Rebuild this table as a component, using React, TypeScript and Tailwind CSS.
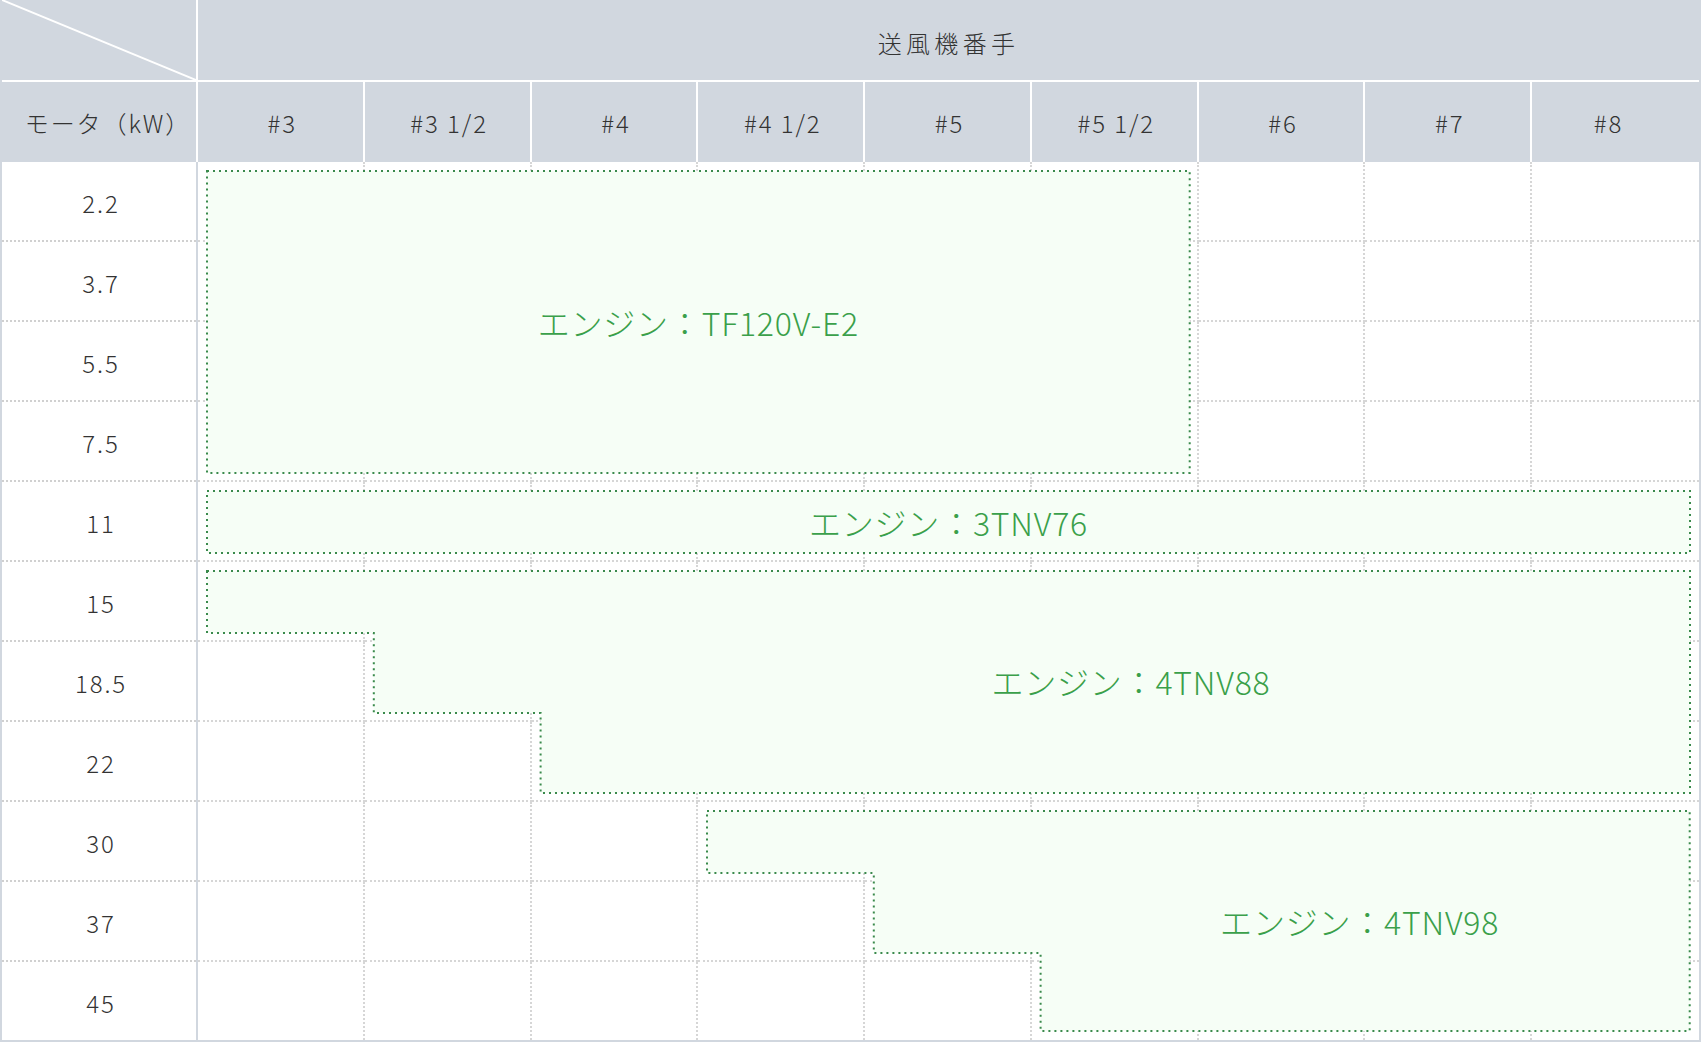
import React from 'react';

const FANS = ['#3', '#3 1/2', '#4', '#4 1/2', '#5', '#5 1/2', '#6', '#7', '#8'];
const MOTORS = ['2.2', '3.7', '5.5', '7.5', '11', '15', '18.5', '22', '30', '37', '45'];

// body grid geometry (px) – used for the dotted engine outlines
const CELL_W = 1501 / 9;
const INSET = 9;

interface EngineArea {
    label: string;
    place: string;
    cols: number;
    steps: number[];
    heights: number[];
    labelPad: string;
}

const AREAS: EngineArea[] = [
    {
        label: 'エンジン：TF120V-E2',
        place: 'col-start-1 col-span-6 row-start-1 row-span-4',
        cols: 6,
        steps: [0, 0, 0, 0],
        heights: [80, 80, 80, 80],
        labelPad: '',
    },
    {
        label: 'エンジン：3TNV76',
        place: 'col-start-1 col-span-9 row-start-5 row-span-1',
        cols: 9,
        steps: [0],
        heights: [80],
        labelPad: '',
    },
    {
        label: 'エンジン：4TNV88',
        place: 'col-start-1 col-span-9 row-start-6 row-span-3',
        cols: 9,
        steps: [0, 1, 2],
        heights: [80, 80, 80],
        labelPad: 'pl-[365px] pb-[3px]',
    },
    {
        label: 'エンジン：4TNV98',
        place: 'col-start-4 col-span-6 row-start-9 row-span-3',
        cols: 6,
        steps: [0, 1, 2],
        heights: [80, 80, 78],
        labelPad: 'pl-[322px]',
    },
];

const outlinePath = (steps: number[], cols: number, heights: number[]) => {
    const w = cols * CELL_W;
    const h = heights.reduce((a, b) => a + b, 0);
    const d = INSET;
    const x = (s: number) => s * CELL_W + d;
    const last = steps.length - 1;
    const pts: number[][] = [
        [x(steps[0]), d],
        [w - d, d],
        [w - d, h - d],
        [x(steps[last]), h - d],
    ];
    let y = h - heights[last];
    for (let r = last; r > 0; r--) {
        if (steps[r] !== steps[r - 1]) {
            pts.push([x(steps[r]), y - d]);
            pts.push([x(steps[r - 1]), y - d]);
        }
        y -= heights[r - 1];
    }
    return 'M' + pts.map((p) => `${p[0].toFixed(1)} ${p[1].toFixed(1)}`).join(' L') + ' Z';
};

const Area = ({ area }: { area: EngineArea }) => (
    <div className={`relative ${area.place}`}>
        <svg className="absolute inset-0 w-full h-full overflow-visible">
            <path
                d={outlinePath(area.steps, area.cols, area.heights)}
                fill="#f6fef6"
                stroke="#3a8a4c"
                strokeWidth={2}
                strokeDasharray="2 4"
            />
        </svg>
        <div className={`relative flex h-full items-center justify-center text-[32px] tracking-[0.025em] text-[#3aa04a] ${area.labelPad}`}>
            {area.label}
        </div>
    </div>
);

export default function App() {
    return (
        <div className="w-[1701px] h-[1042px] bg-white border-x-2 border-b-2 border-[#d1d7df] text-[24px] font-light tracking-[0.08em] text-[#333] font-['Noto_Sans_CJK_JP','Noto_Sans',sans-serif]">
            {/* header */}
            <div className="grid grid-cols-[196px_repeat(9,minmax(0,1fr))] grid-rows-[82px_80px] bg-[#d1d7df]">
                <div className="relative border-r-2 border-b-2 border-white">
                    <svg className="absolute inset-0 w-full h-full" viewBox="0 0 100 100" preserveAspectRatio="none">
                        <line x1="0" y1="0" x2="100" y2="100" stroke="#fff" strokeWidth={2} vectorEffect="non-scaling-stroke" />
                    </svg>
                </div>
                <div className="col-span-9 flex items-center justify-center pt-[6px] border-b-2 border-white tracking-[0.18em]">
                    送風機番手
                </div>
                <div className="flex items-center justify-center pt-[1px] pl-[18px] border-r-2 border-white">モータ（kW）</div>
                {FANS.map((f, i) => (
                    <div
                        key={f}
                        className={`flex items-center justify-center pt-[1px] ${i < FANS.length - 1 ? 'pl-[4px] border-r-2 border-white' : 'pr-[14px]'}`}
                    >
                        {f}
                    </div>
                ))}
            </div>

            {/* body */}
            <div className="flex">
                <div className="w-[196px] border-r-2 border-[#d1d7df]">
                    {MOTORS.map((m, i) => (
                        <div
                            key={m}
                            className={`flex items-center justify-center pt-[4px] pl-[4px] ${i < MOTORS.length - 1 ? 'h-20 border-b-2 border-dotted border-[#d0d0d0]' : 'h-[78px]'}`}
                        >
                            {m}
                        </div>
                    ))}
                </div>

                <div className="relative flex-1">
                    <div className="grid grid-cols-9 grid-rows-[repeat(10,80px)_78px]">
                        {MOTORS.map((m, r) =>
                            FANS.map((f, c) => (
                                <div
                                    key={`${m}-${f}`}
                                    className={`border-dotted border-[#d6d6d6] ${c < FANS.length - 1 ? 'border-r-2' : ''} ${r < MOTORS.length - 1 ? 'border-b-2' : ''}`}
                                />
                            ))
                        )}
                    </div>
                    <div className="absolute inset-0 grid grid-cols-9 grid-rows-[repeat(10,80px)_78px]">
                        {AREAS.map((a) => (
                            <Area key={a.label} area={a} />
                        ))}
                    </div>
                </div>
            </div>
        </div>
    );
}
